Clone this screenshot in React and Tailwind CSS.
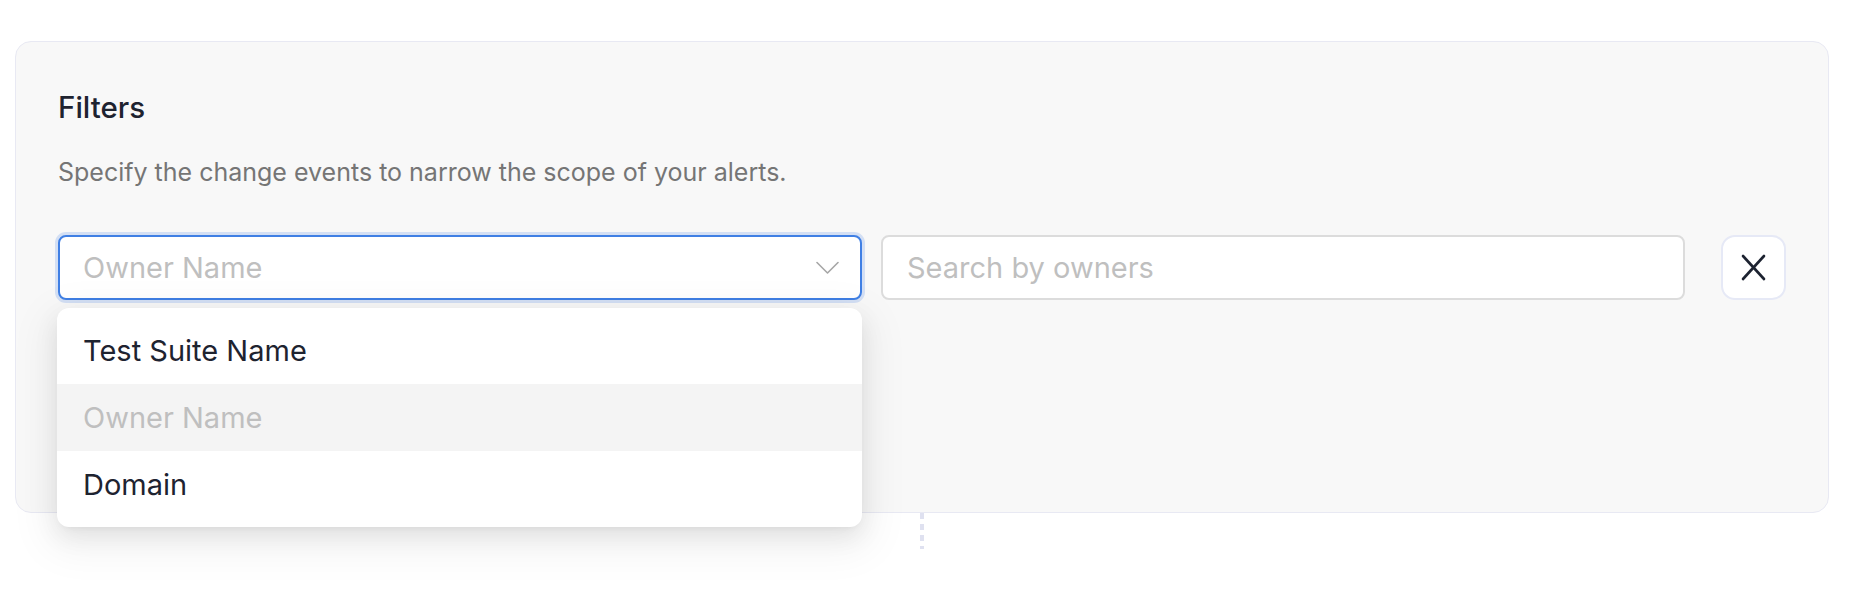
import React from "react";

export default function App() {
  return (
    <div className="w-[1855px] h-[589px] bg-white pt-[41px] pl-[15px] font-['Inter','Noto_Sans',sans-serif] overflow-hidden">
      <div className="relative w-[1814px] h-[472px] rounded-[16px] border border-[#e8e9f3] bg-[#f8f8f8] px-[42px] pt-[47px]">
        <h2 className="text-[29.5px] leading-[36px] font-medium text-[#1e2330]">Filters</h2>
        <p className="mt-[31px] text-[25px] leading-[32px] text-[#757575]">
          Specify the change events to narrow the scope of your alerts.
        </p>
        <div className="mt-[47px] flex items-center">
          <div className="relative w-[804px] shrink-0">
            <div className="flex h-[65px] items-center justify-between rounded-[8px] border-2 border-[#3f7fe4] bg-white pl-[23px] pr-[21px] shadow-[0_0_0_3px_rgba(63,127,228,0.2)]">
              <span className="text-[29px] text-[#bfbfbf]">Owner Name</span>
              <svg width="23" height="14" viewBox="0 0 23 14" fill="none">
                <polyline points="1,1.5 11.5,12 22,1.5" stroke="#a6a6a6" strokeWidth="1.6" strokeLinecap="round" strokeLinejoin="round" />
              </svg>
            </div>
            <div className="absolute left-[-1px] top-[73px] z-10 w-[805px] rounded-[12px] bg-white py-[9px] shadow-[0_9px_24px_rgba(0,0,0,0.08),0_4px_9px_-6px_rgba(0,0,0,0.12),0_13px_40px_12px_rgba(0,0,0,0.05)]">
              <div className="flex h-[67px] items-center pl-[26px] text-[29px] text-[#1e2330]">Test Suite Name</div>
              <div className="flex h-[67px] items-center bg-[#f4f4f4] pl-[26px] text-[29px] text-[#bfbfbf]">Owner Name</div>
              <div className="flex h-[67px] items-center pl-[26px] text-[29px] text-[#1e2330]">Domain</div>
            </div>
          </div>
          <div className="ml-[19px] flex h-[65px] w-[804px] shrink-0 items-center rounded-[8px] border-2 border-[#dcdcdc] bg-white pl-[24px]">
            <span className="text-[29px] text-[#bfbfbf]">Search by owners</span>
          </div>
          <button className="ml-[36px] flex h-[65px] w-[65px] shrink-0 items-center justify-center rounded-[14px] border-2 border-[#e6e9f6] bg-white">
            <svg width="25" height="27" viewBox="0 0 25 27" fill="none">
              <line x1="2" y1="2" x2="23" y2="25" stroke="#1c2230" strokeWidth="2.6" strokeLinecap="round" />
              <line x1="23" y1="2" x2="2" y2="25" stroke="#1c2230" strokeWidth="2.6" strokeLinecap="round" />
            </svg>
          </button>
        </div>
      </div>
      <div className="ml-[905px] h-[36px] w-[4px]">
        <svg width="4" height="36" viewBox="0 0 4 36">
          <line x1="2" y1="0" x2="2" y2="36" stroke="#dfe1f0" strokeWidth="4" strokeDasharray="6 5" />
        </svg>
      </div>
    </div>
  );
}
